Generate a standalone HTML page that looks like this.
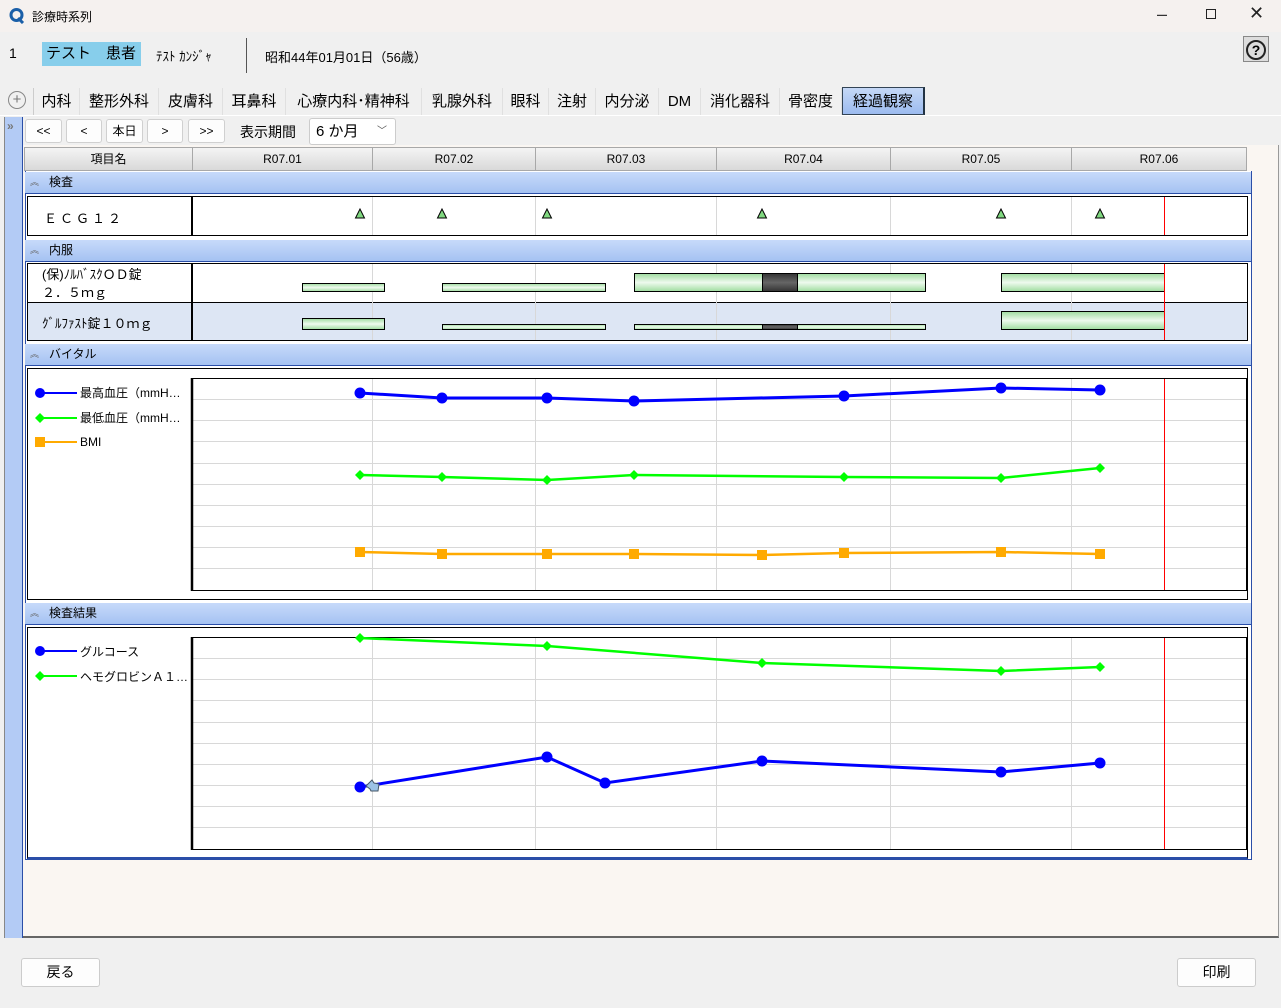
<!DOCTYPE html>
<html><head><meta charset="utf-8">
<style>
*{margin:0;padding:0;box-sizing:border-box}
body{width:1281px;height:1008px;overflow:hidden;background:#f0f0f0;font-family:"Liberation Sans","Noto Sans CJK JP",sans-serif;color:#000;position:relative}
.a{position:absolute}
.tb{left:0;top:0;width:1281px;height:32px;background:#f5f1ef;font-size:12px}
.tab{position:absolute;top:88px;height:27px;font-size:15px;line-height:27px;text-align:center;border-right:1px solid #e0e0e0;background:#f0f0f0}
.btn{position:absolute;top:119px;height:24px;background:#fdfdfd;border:1px solid #d0d0d0;border-radius:3px;font-size:12px;text-align:center;line-height:22px}
.hd{position:absolute;top:147px;height:24px;background:linear-gradient(#f4f4f4,#d9d9d9);border:1px solid #a8a8a8;border-left:none;font-size:12px;text-align:center;line-height:22px}
.sec{position:absolute;left:25px;width:1227px;height:22px;background:linear-gradient(#c7dafa,#a5c2f2);border-bottom:1px solid #2a4ea8;border-right:1px solid #2a4ea8;font-size:12px;line-height:21px;padding-left:24px}
.sec:before{content:"︽";position:absolute;left:5px;top:0;font-size:9px;color:#666}
.box{position:absolute;left:27px;width:1221px;border:1px solid #000;background:#fff}
.lbl{position:absolute;font-size:13px}
.fb{position:absolute;top:958px;width:79px;height:29px;background:#fdfdfd;border:1px solid #ccc;border-radius:3px;font-size:14px;text-align:center;line-height:27px}
</style></head><body>
<div class="a tb">
 <svg class="a" style="left:9px;top:8px" width="16" height="16" viewBox="0 0 16 16"><circle cx="7.5" cy="7" r="5.5" fill="none" stroke="#1a5fa8" stroke-width="3"/><path d="M9 10l5 5" stroke="#1a5fa8" stroke-width="3"/></svg>
 <span class="a" style="left:32px;top:8px">診療時系列</span>
 <span class="a" style="left:1157px;top:4px;font-size:18px;color:#333">–</span>
 <span class="a" style="left:1206px;top:9px;width:10px;height:10px;border:1.3px solid #222"></span>
 <span class="a" style="left:1249px;top:3px;font-size:18px;color:#222">✕</span>
</div>
<span class="a" style="left:9px;top:45px;font-size:14px">1</span>
<span class="a" style="left:42px;top:42px;width:99px;height:24px;background:#87ceeb;font-size:15px;line-height:24px;padding-left:4px">テスト　患者</span>
<span class="a" style="left:156px;top:46px;font-size:13px">ﾃｽﾄ ｶﾝｼﾞｬ</span>
<span class="a" style="left:246px;top:38px;width:1px;height:35px;background:#555"></span>
<span class="a" style="left:265px;top:47px;font-size:13px">昭和44年01月01日（56歳）</span>
<span class="a" style="left:1243px;top:36px;width:26px;height:26px;border:1px solid #888;background:#ddd;text-align:center;line-height:24px;font-weight:bold;font-size:18px"><span style="display:inline-block;width:20px;height:20px;border:2px solid #222;border-radius:50%;line-height:16px;font-size:14px;margin-top:2px">?</span></span>
<div class="a" style="left:0;top:115px;width:1281px;height:1px;background:#fff"></div>
<span class="a" style="left:8px;top:91px;width:18px;height:18px;border:1px solid #888;border-radius:50%;text-align:center;line-height:15px;color:#777;font-size:15px">+</span>
<div class="tab" style="left:33px;width:47px;border-left:1px solid #ccc">内科</div>
<div class="tab" style="left:80px;width:79px">整形外科</div>
<div class="tab" style="left:159px;width:64px">皮膚科</div>
<div class="tab" style="left:223px;width:63px">耳鼻科</div>
<div class="tab" style="left:286px;width:136px">心療内科･精神科</div>
<div class="tab" style="left:422px;width:81px">乳腺外科</div>
<div class="tab" style="left:503px;width:46px">眼科</div>
<div class="tab" style="left:549px;width:47px">注射</div>
<div class="tab" style="left:596px;width:63px">内分泌</div>
<div class="tab" style="left:659px;width:42px">DM</div>
<div class="tab" style="left:701px;width:79px">消化器科</div>
<div class="tab" style="left:780px;width:62px">骨密度</div>
<div class="tab" style="left:842px;width:83px;top:87px;height:28px;background:linear-gradient(#c5d8f6,#9cbbef);border:1px solid #345;border-right:2px solid #234">経過観察</div>
<!-- content -->
<div class="a" style="left:22px;top:145px;width:1257px;height:793px;background:#faf6f2;border-right:1px solid #999;border-bottom:2px solid #666"></div>
<div class="a" style="left:4px;top:117px;width:19px;height:821px;background:#b3cbf5;border-right:1px solid #2a4ea8;border-left:1px solid #888"></div>
<span class="a" style="left:7px;top:119px;font-size:12px;color:#777;font-weight:bold">»</span>
<div class="btn" style="left:25px;width:37px">&lt;&lt;</div>
<div class="btn" style="left:66px;width:36px">&lt;</div>
<div class="btn" style="left:106px;width:37px">本日</div>
<div class="btn" style="left:147px;width:36px">&gt;</div>
<div class="btn" style="left:188px;width:37px">&gt;&gt;</div>
<span class="a" style="left:240px;top:122px;font-size:14px">表示期間</span>
<div class="a" style="left:309px;top:118px;width:87px;height:27px;background:#fff;border:1px solid #ccc;border-radius:3px;font-size:15px;line-height:25px;padding-left:6px">6 か月<span style="position:absolute;right:8px;top:0;font-size:10px;color:#555">﹀</span></div>
<div class="hd" style="left:24px;width:169px;border-left:1px solid #a8a8a8">項目名</div>
<div class="hd" style="left:193px;width:180px">R07.01</div>
<div class="hd" style="left:373px;width:163px">R07.02</div>
<div class="hd" style="left:536px;width:181px">R07.03</div>
<div class="hd" style="left:717px;width:174px">R07.04</div>
<div class="hd" style="left:891px;width:181px">R07.05</div>
<div class="hd" style="left:1072px;width:175px">R07.06</div>

<div class="a" style="left:25px;top:171px;width:1227px;height:689px;background:#fff;border:1px solid #2a4ea8;border-top:none"></div>
<div class="a" style="left:25px;top:171px;width:1px;height:689px;background:#2a4ea8"></div>
<div class="sec" style="top:172px">検査</div>
<div class="box" style="top:196px;height:40px"></div>
<div class="sec" style="top:240px">内服</div>
<div class="box" style="top:263px;height:78px"></div>
<div class="a" style="left:28px;top:302px;width:1219px;height:38px;background:#dde6f4;border-top:1px solid #000"></div>
<div class="sec" style="top:344px">バイタル</div>
<div class="box" style="top:368px;height:232px"></div>
<div class="sec" style="top:603px">検査結果</div>
<div class="box" style="top:627px;height:232px;border-bottom:2px solid #2a4ea8;border-left-color:#000"></div>

<span class="lbl" style="left:44px;top:208px;letter-spacing:3px">ＥＣＧ１２</span>
<span class="lbl" style="left:42px;top:266px;line-height:18px">(保)ﾉﾙﾊﾞｽｸＯＤ錠<br>２．５ｍｇ</span>
<span class="lbl" style="left:42px;top:313px">ｸﾞﾙﾌｧｽﾄ錠１０ｍｇ</span>
<span class="lbl" style="left:80px;top:384px;font-size:12px">最高血圧（mmH…</span>
<span class="lbl" style="left:80px;top:409px;font-size:12px">最低血圧（mmH…</span>
<span class="lbl" style="left:80px;top:435px;font-size:12px">BMI</span>
<span class="lbl" style="left:80px;top:643px;font-size:12px">グルコース</span>
<span class="lbl" style="left:80px;top:668px;font-size:12px">ヘモグロビンＡ１…</span>

<svg class="a" style="left:0;top:0" width="1281" height="1008">
<defs><linearGradient id="g" x1="0" y1="0" x2="0" y2="1"><stop offset="0" stop-color="#9fdc9f"/><stop offset=".5" stop-color="#eefaee"/><stop offset="1" stop-color="#9fdc9f"/></linearGradient>
<linearGradient id="d" x1="0" y1="0" x2="0" y2="1"><stop offset="0" stop-color="#333"/><stop offset=".5" stop-color="#666"/><stop offset="1" stop-color="#333"/></linearGradient></defs>
<g stroke="#d8d8d8" stroke-width="1">
<path d="M372.5 197V235M535.5 197V235M716.5 197V235M890.5 197V235M1071.5 197V235"/>
<path d="M372.5 264V340M535.5 264V340M716.5 264V340M890.5 264V340M1071.5 264V340"/>
<path d="M372.5 379V590M535.5 379V590M716.5 379V590M890.5 379V590M1071.5 379V590"/>
<path d="M372.5 638V849M535.5 638V849M716.5 638V849M890.5 638V849M1071.5 638V849"/>
<path d="M193 399.5H1246M193 420.5H1246M193 441.5H1246M193 463.5H1246M193 484.5H1246M193 505.5H1246M193 526.5H1246M193 547.5H1246M193 568.5H1246"/>
<path d="M193 658.5H1246M193 679.5H1246M193 700.5H1246M193 722.5H1246M193 743.5H1246M193 764.5H1246M193 785.5H1246M193 806.5H1246M193 827.5H1246"/>
</g>
<path d="M192 197V235M192 264V340" stroke="#000" stroke-width="2"/>
<rect x="192.5" y="378.5" width="1054" height="212" fill="none" stroke="#000"/>
<path d="M192 378V591" stroke="#000" stroke-width="2.5"/>
<rect x="192.5" y="637.5" width="1054" height="212" fill="none" stroke="#000"/>
<path d="M192 637V850" stroke="#000" stroke-width="2.5"/>
<g fill="#80d880" stroke="#000" stroke-width="1">
<path d="M360 209l-4.5 9h9z"/><path d="M442 209l-4.5 9h9z"/><path d="M547 209l-4.5 9h9z"/><path d="M762 209l-4.5 9h9z"/><path d="M1001 209l-4.5 9h9z"/><path d="M1100 209l-4.5 9h9z"/>
</g>
<g stroke="#000" stroke-width="1">
<rect x="302.5" y="283.5" width="82" height="8" fill="url(#g)"/>
<rect x="442.5" y="283.5" width="163" height="8" fill="url(#g)"/>
<rect x="634.5" y="273.5" width="291" height="18" fill="url(#g)"/>
<rect x="762.5" y="273.5" width="35" height="18" fill="url(#d)"/>
<rect x="1001.5" y="273.5" width="163" height="18" fill="url(#g)"/>
<rect x="302.5" y="318.5" width="82" height="11" fill="url(#g)"/>
<rect x="442.5" y="324.5" width="163" height="5" fill="url(#g)"/>
<rect x="634.5" y="324.5" width="291" height="5" fill="url(#g)"/>
<rect x="762.5" y="324.5" width="35" height="5" fill="url(#d)"/>
<rect x="1001.5" y="311.5" width="163" height="18" fill="url(#g)"/>
</g>
<path d="M1164.5 197V235M1164.5 264V340M1164.5 379V590M1164.5 638V849" stroke="#f00"/>
<!-- legends -->
<path d="M40 393H77" stroke="#00f" stroke-width="2"/><circle cx="40" cy="393" r="5" fill="#00f"/>
<path d="M40 418H77" stroke="#0f0" stroke-width="2"/><path d="M40 413l5 5-5 5-5-5z" fill="#0f0"/>
<path d="M40 442H77" stroke="#fa0" stroke-width="2"/><rect x="35" y="437" width="10" height="10" fill="#fa0"/>
<path d="M40 651H77" stroke="#00f" stroke-width="2"/><circle cx="40" cy="651" r="5" fill="#00f"/>
<path d="M40 676H77" stroke="#0f0" stroke-width="2"/><path d="M40 671l5 5-5 5-5-5z" fill="#0f0"/>
<!-- vitals -->
<polyline points="360,393 442,398 547,398 634,401 844,396 1001,388 1100,390" fill="none" stroke="#00f" stroke-width="3"/>
<g fill="#00f"><circle cx="360" cy="393" r="5.5"/><circle cx="442" cy="398" r="5.5"/><circle cx="547" cy="398" r="5.5"/><circle cx="634" cy="401" r="5.5"/><circle cx="844" cy="396" r="5.5"/><circle cx="1001" cy="388" r="5.5"/><circle cx="1100" cy="390" r="5.5"/></g>
<polyline points="360,475 442,477 547,480 634,475 844,477 1001,478 1100,468" fill="none" stroke="#0f0" stroke-width="2.5"/>
<g fill="#0f0"><path d="M360 470l5 5-5 5-5-5z"/><path d="M442 472l5 5-5 5-5-5z"/><path d="M547 475l5 5-5 5-5-5z"/><path d="M634 470l5 5-5 5-5-5z"/><path d="M844 472l5 5-5 5-5-5z"/><path d="M1001 473l5 5-5 5-5-5z"/><path d="M1100 463l5 5-5 5-5-5z"/></g>
<polyline points="360,552 442,554 547,554 634,554 762,555 844,553 1001,552 1100,554" fill="none" stroke="#fa0" stroke-width="2.5"/>
<g fill="#fa0"><rect x="355" y="547" width="10" height="10"/><rect x="437" y="549" width="10" height="10"/><rect x="542" y="549" width="10" height="10"/><rect x="629" y="549" width="10" height="10"/><rect x="757" y="550" width="10" height="10"/><rect x="839" y="548" width="10" height="10"/><rect x="996" y="547" width="10" height="10"/><rect x="1095" y="549" width="10" height="10"/></g>
<!-- lab -->
<polyline points="360,638 547,646 762,663 1001,671 1100,667" fill="none" stroke="#0f0" stroke-width="2.5"/>
<g fill="#0f0"><path d="M360 633l5 5-5 5-5-5z"/><path d="M547 641l5 5-5 5-5-5z"/><path d="M762 658l5 5-5 5-5-5z"/><path d="M1001 666l5 5-5 5-5-5z"/><path d="M1100 662l5 5-5 5-5-5z"/></g>
<polyline points="360,787 547,757 605,783 762,761 1001,772 1100,763" fill="none" stroke="#00f" stroke-width="3"/>
<g fill="#00f"><circle cx="360" cy="787" r="5.5"/><circle cx="547" cy="757" r="5.5"/><circle cx="605" cy="783" r="5.5"/><circle cx="762" cy="761" r="5.5"/><circle cx="1001" cy="772" r="5.5"/><circle cx="1100" cy="763" r="5.5"/></g>
<path d="M366 786l6-6 2 3 5 1-1 7-7 0-1-2z" fill="#9cc2e6" stroke="#456" stroke-width="1"/>
</svg>
<div class="fb" style="left:21px">戻る</div>
<div class="fb" style="left:1177px">印刷</div>
</body></html>
